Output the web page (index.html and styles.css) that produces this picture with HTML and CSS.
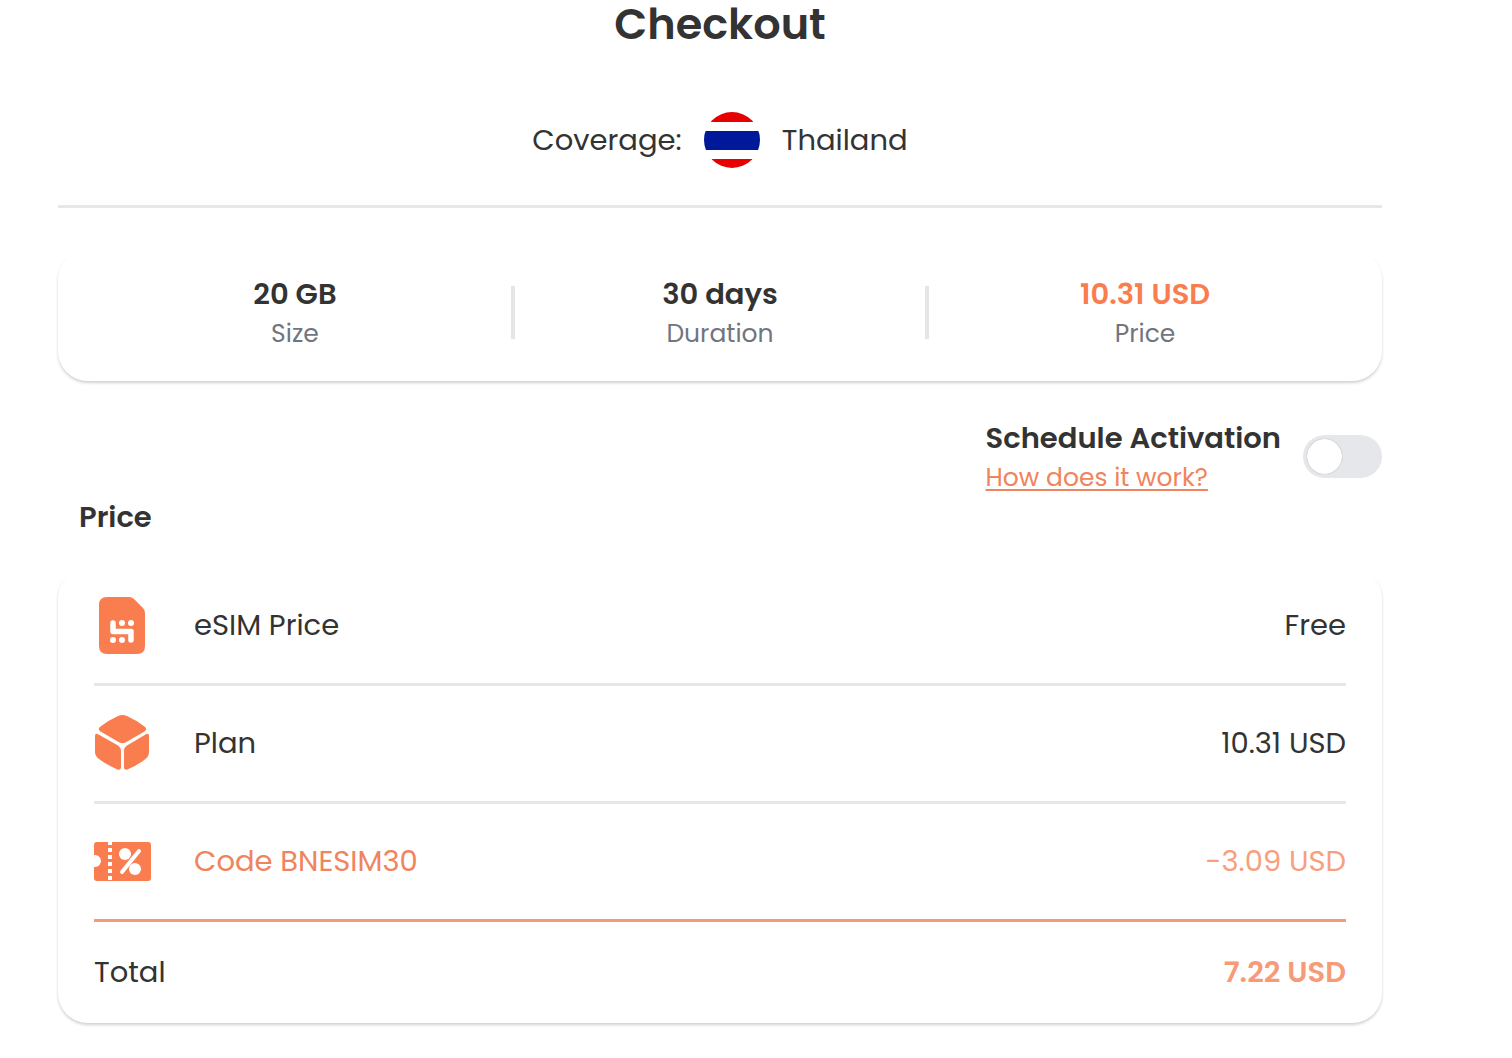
FILE: index.html
```html
<!DOCTYPE html>
<html lang="en">
<head>
    <meta charset="UTF-8">
    <meta name="viewport" content="width=device-width, initial-scale=1.0">
    <title>Checkout</title>
    <link rel="stylesheet" href="styles.css">
</head>
<body>
<main class="checkout">
    <h1>Checkout</h1>

    <div class="coverage">
        <span>Coverage:</span>
        <svg class="flag" viewBox="0 0 56 56" aria-hidden="true">
            <clipPath id="round"><circle cx="28" cy="28" r="28"/></clipPath>
            <g clip-path="url(#round)">
                <path fill="#e60000" d="M0 0H56V10H0ZM0 47H56V56H0Z"/>
                <rect y="19" width="56" height="19" fill="#00199a"/>
            </g>
        </svg>
        <span>Thailand</span>
    </div>

    <div class="card summary">
        <div class="item">
            <strong>20 GB</strong>
            <span>Size</span>
        </div>
        <div class="divider"></div>
        <div class="item">
            <strong>30 days</strong>
            <span>Duration</span>
        </div>
        <div class="divider"></div>
        <div class="item">
            <strong class="accent">10.31 USD</strong>
            <span>Price</span>
        </div>
    </div>

    <div class="schedule">
        <div class="schedule-text">
            <label for="schedule">Schedule Activation</label>
            <a href="#">How does it work?</a>
        </div>
        <input type="checkbox" id="schedule" class="toggle">
    </div>

    <h2>Price</h2>

    <div class="card prices">
        <table>
            <tr>
                <td class="icon">
                    <svg width="58" height="58" viewBox="0 1 58 58" aria-hidden="true">
                        <path fill="#fa7d50" d="M13 1H35Q38 1 40 3L49 12Q51 14 51 17V50Q51 58 43 58H13Q5 58 5 50V9Q5 1 13 1Z"/>
                        <path fill="none" stroke="#fff" stroke-width="5.500" stroke-linecap="round" stroke-linejoin="round" d="M19 27V35.500H37V44"/>
                        <g fill="#fff">
                            <circle cx="28" cy="27" r="3"/>
                            <circle cx="37" cy="27" r="3"/>
                            <circle cx="19" cy="44" r="3"/>
                            <circle cx="28" cy="44" r="3"/>
                        </g>
                    </svg>
                </td>
                <th scope="row">eSIM Price</th>
                <td class="amount">Free</td>
            </tr>
            <tr>
                <td class="icon">
                    <svg width="58" height="58" viewBox="0 1 58 58" fill="#fa7d50" aria-hidden="true">
                        <path d="M24 2Q28.500 0 33 2Q42 6 50.500 12.500Q54 15 50.500 17.500L31.500 28.500Q28.500 30 25.500 28.500L6.500 17.500Q3 15 6.500 12.500Q15 6 24 2Z"/>
                        <path d="M1 22Q1 18.500 4.500 20.500L24 31.500Q27 33.500 27 36.500V53Q27 56.500 23.500 55.500Q13 51 5 45Q1 42 1 38Z"/>
                        <path d="M55 22Q55 18.500 51.500 20.500L33 31.500Q30 33.500 30 36.500V53Q30 56.500 33.500 55.500Q44 51 51.500 45Q55 42 55 38Z"/>
                    </svg>
                </td>
                <th scope="row">Plan</th>
                <td class="amount">10.31 USD</td>
            </tr>
            <tr class="discount">
                <td class="icon">
                    <svg width="58" height="58" viewBox="0 0 58 58" aria-hidden="true">
                        <path fill="#fa7d50" d="M3 9H54Q57 9 57 12V45Q57 48 54 48H3Q0 48 0 45V34H1A6 6 0 0 0 1 22H0V12Q0 9 3 9Z"/>
                        <path stroke="#fff" stroke-width="4" stroke-dasharray="4 3" d="M16 8V49"/>
                        <path stroke="#fff" stroke-width="4" stroke-linecap="round" d="M45 18L28 39"/>
                        <circle cx="31" cy="21" r="6" fill="#fff"/>
                        <circle cx="41" cy="36" r="6" fill="#fff"/>
                    </svg>
                </td>
                <th scope="row">Code BNESIM30</th>
                <td class="amount">-3.09 USD</td>
            </tr>
            <tr class="total">
                <th scope="row" colspan="2">Total</th>
                <td class="amount">7.22 USD</td>
            </tr>
        </table>
    </div>
</main>
</body>
</html>
```

FILE: styles.css
```css
* {
    box-sizing: border-box;
}

body {
    margin: 0;
    background: #fff;
    color: #333;
    font-family: Poppins, Inter, "Open Sans", sans-serif;
    font-size: 29px;
    line-height: 39px;
}

.checkout {
    padding: 0 130px 32px 58px;
}

h1 {
    margin: 0;
    font-size: 43px;
    font-weight: 600;
    line-height: 48px;
    text-align: center;
}

.coverage {
    display: flex;
    align-items: center;
    justify-content: center;
    gap: 22px;
    margin-bottom: 42px;
    padding: 64px 0 37px;
    border-bottom: 3px solid #e7e7e7;
}

.flag {
    width: 56px;
    height: 56px;
}

.card {
    border-radius: 30px;
    box-shadow: 0 2px 3px rgba(0, 0, 0, 0.18);
}

.summary {
    display: grid;
    grid-template-columns: 20fr 4px 19fr 4px 20fr;
    align-items: center;
    padding: 25px 21px 28px;
}

.item {
    display: flex;
    flex-direction: column;
    text-align: center;
}

.item strong {
    font-weight: 600;
}

.item span {
    color: #717580;
    font-size: 25px;
}

.item .accent {
    color: #fa7d50;
}

.divider {
    height: 53px;
    margin-bottom: 3px;
    background: #e5e5e7;
}

.schedule {
    display: flex;
    align-items: center;
    justify-content: flex-end;
    gap: 22px;
    margin-top: 38px;
}

.schedule-text {
    display: flex;
    flex-direction: column;
    align-items: flex-start;
}

.schedule-text label {
    font-weight: 600;
}

.schedule-text a {
    color: #f0845c;
    font-size: 25px;
    text-underline-offset: 3px;
}

.toggle {
    appearance: none;
    width: 79px;
    height: 43px;
    margin: 0 0 3px;
    padding: 4px;
    border-radius: 22px;
    background: #e5e7ea;
    cursor: pointer;
}

.toggle::before {
    content: "";
    display: block;
    width: 35px;
    height: 35px;
    border-radius: 50%;
    background: #fff;
    box-shadow: 0 0 1px rgba(0, 0, 0, 0.4);
}

.toggle:checked {
    background: #fa7d50;
}

.toggle:checked::before {
    margin-left: auto;
}

h2 {
    margin: 0 0 31px 21px;
    font-size: 29px;
    font-weight: 600;
    line-height: 40px;
}

.prices {
    padding: 0 36px;
}

table {
    width: 100%;
    border-spacing: 0;
}

td, th {
    height: 118px;
    padding: 0;
    border-bottom: 3px solid #e7e7e7;
    font-weight: 400;
    text-align: left;
}

.icon {
    width: 100px;
}

.icon svg {
    display: block;
}

.amount {
    text-align: right;
}

.discount td, .discount th {
    border-bottom-color: #f79a78;
    color: #f0845c;
}

.discount .amount {
    color: #f79f7f;
}

.total td, .total th {
    height: 101px;
    border-bottom: 0;
}

.total .amount {
    color: #f79a78;
    font-weight: 600;
}
```
